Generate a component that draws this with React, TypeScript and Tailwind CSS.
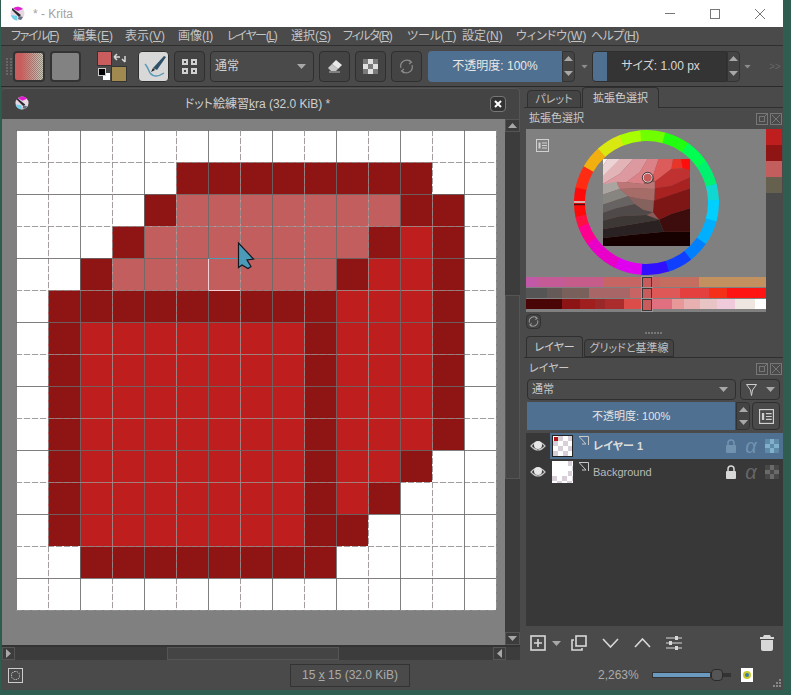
import React from 'react';

const font = "font-['Liberation_Sans','Noto_Sans_CJK_JP',sans-serif] [font-feature-settings:'palt']";

const menus = [
  { label: 'ファイル', key: 'F', w: 'w-[62px] tracking-[-1.4px]' },
  { label: '編集', key: 'E', w: 'w-[52px]' },
  { label: '表示', key: 'V', w: 'w-[53px]' },
  { label: '画像', key: 'I', w: 'w-[49px]' },
  { label: 'レイヤー', key: 'L', w: 'w-[64px] tracking-[-1.3px]' },
  { label: '選択', key: 'S', w: 'w-[52px]' },
  { label: 'フィルタ', key: 'R', w: 'w-[64px] tracking-[-1.3px]' },
  { label: 'ツール', key: 'T', w: 'w-[55px]' },
  { label: '設定', key: 'N', w: 'w-[54px]' },
  { label: 'ウィンドウ', key: 'W', w: 'w-[75px]' },
  { label: 'ヘルプ', key: 'H', w: 'w-[60px] tracking-[-0.6px]' },
];

// 15x15 sprite: . white, d dark, l light, r red
const sprite = [
  '...............',
  '.....dddddddd..',
  '....dllllllldd.',
  '...dllllllldrd.',
  '..dllllllldrrd.',
  '.dddddddddrrrd.',
  '.drrrrrrrdrrrd.',
  '.drrrrrrrdrrrd.',
  '.drrrrrrrdrrrd.',
  '.drrrrrrrdrrrd.',
  '.drrrrrrrdrrd..',
  '.drrrrrrrdrd...',
  '.drrrrrrrdd....',
  '..dddddddd.....',
  '...............',
];

const cellClass: Record<string, string> = {
  '.': 'bg-white',
  d: 'bg-[#8f1515]',
  l: 'bg-[#c25e5e]',
  r: 'bg-[#bf1e1e]',
};

const wheel: [number, number, string][] = [
  [-12, 12, '#ff0a0a'],
  [12, 30, '#ff2c14'],
  [30, 48, '#f2b010'],
  [48, 68, '#d8e810'],
  [68, 85, '#a8ff00'],
  [85, 105, '#70ff00'],
  [105, 125, '#20ff10'],
  [125, 145, '#00ff50'],
  [145, 165, '#00f070'],
  [165, 178, '#10d8d0'],
  [178, 195, '#00d0ff'],
  [195, 215, '#00b0ff'],
  [215, 232, '#0080ff'],
  [232, 252, '#1040ff'],
  [252, 274, '#3010ff'],
  [274, 296, '#e000f0'],
  [296, 325, '#e800c8'],
  [325, 340, '#ff0090'],
  [340, 348, '#ff1040'],
];

function arc(a: number, b: number, r: number) {
  const pt = (deg: number) => {
    const t = (deg * Math.PI) / 180;
    return `${72.5 - r * Math.cos(t)} ${72.5 - r * Math.sin(t)}`;
  };
  return `M${pt(a)} A${r} ${r} 0 0 1 ${pt(b)}`;
}

// back to front, in a 261 unit box
const patches: [string, string][] = [
  ['-10,-10 271,-10 271,271 -10,271', '#8a5a5a'],
  ['0,-10 20,-10 0,20', '#f6f2f2'],
  ['20,-10 60,-10 0,60 0,20', '#ecd4d6'],
  ['60,-10 100,-10 50,45 -10,80 -10,60', '#e2b4b8'],
  ['100,-10 140,-10 110,40 70,70 -10,80 50,45', '#dc9aa0'],
  ['140,-10 170,-10 150,50 120,75 70,70 110,40', '#da8288'],
  ['170,-10 212,-10 205,30 155,68 150,50', '#dc5c5c'],
  ['212,-10 232,-10 245,28 205,30', '#e8342a'],
  ['232,-10 271,-10 271,38 240,35', '#ff1010'],
  ['205,30 245,28 271,38 271,50 205,80 155,88 155,68', '#c03030'],
  ['155,88 205,80 271,50 271,85 155,125', '#a92424'],
  ['152,125 271,85 271,145 205,165 168,182 150,160', '#7f1616'],
  ['168,182 205,165 271,145 271,218 182,218', '#3c0808'],
  ['40,68 70,70 120,75 155,68 155,90 100,88 50,90', '#bc7676'],
  ['50,90 100,88 155,90 152,125 100,118 75,112', '#a56c68'],
  ['75,112 100,118 152,125 150,160 120,152 95,135', '#86625e'],
  ['-10,78 40,68 50,90 -10,110', '#aaa5a0'],
  ['-10,110 50,90 75,112 -10,140', '#878580'],
  ['-10,140 75,112 95,135 40,148 -10,165', '#666462'],
  ['-10,165 40,148 95,135 120,152 150,160 130,168 50,172 -10,188', '#504a48'],
  ['-10,188 50,172 130,168 168,182 110,192 -10,212', '#3c3836'],
  ['-10,212 110,192 168,182 182,218 80,228 -10,238', '#2a2220'],
  ['-10,238 80,228 182,218 271,218 271,271 -10,271', '#170606'],
];

const strips: [string, string][][] = [
  [
    ['w-[12px]', 'bg-[#c258a8]'],
    ['w-[27px]', 'bg-[#c45a96]'],
    ['w-[38px]', 'bg-[#c65c8a]'],
    ['w-[39px]', 'bg-[#c76464]'],
    ['s', ''],
    ['w-[8px]', 'bg-[#c96462]'],
    ['w-[39px]', 'bg-[#c56e60]'],
    ['w-[67px]', 'bg-[#c3905f]'],
  ],
  [
    ['w-[21px]', 'bg-[#555555]'],
    ['w-[15px]', 'bg-[#665a58]'],
    ['w-[27px]', 'bg-[#7a605a]'],
    ['w-[41px]', 'bg-[#a86666]'],
    ['w-[12px]', 'bg-[#c96464]'],
    ['s', ''],
    ['w-[28px]', 'bg-[#de5858]'],
    ['w-[29px]', 'bg-[#e54040]'],
    ['w-[18px]', 'bg-[#f53018]'],
    ['w-[39px]', 'bg-[#ff1414]'],
  ],
  [
    ['w-[36px]', 'bg-[#4a0606]'],
    ['w-[18px]', 'bg-[#8c1414]'],
    ['w-[15px]', 'bg-[#a01e1e]'],
    ['w-[10px]', 'bg-[#9a2828]'],
    ['w-[19px]', 'bg-[#aa2c2c]'],
    ['w-[18px]', 'bg-[#dc4c48]'],
    ['s', ''],
    ['w-[20px]', 'bg-[#e07080]'],
    ['w-[12px]', 'bg-[#e89898]'],
    ['w-[16px]', 'bg-[#e8b0b0]'],
    ['w-[17px]', 'bg-[#e8c4c4]'],
    ['w-[18px]', 'bg-[#eecada]'],
    ['w-[20px]', 'bg-[#efe6e2]'],
    ['w-[11px]', 'bg-[#ffffff]'],
  ],
];

const checker = 'bg-[repeating-conic-gradient(#d8cfd8_0_25%,#ffffff_0_50%)] bg-[length:10px_10px]';

function KritaLogo({ size = 15 }: { size?: number }) {
  return (
    <svg width={size} height={size} viewBox="0 0 15 15">
      <circle cx="7.5" cy="7.5" r="7" fill="#e8d8e4" />
      <path d="M3 2.5 A7 7 0 0 1 13 3 L8 5Z" fill="#e020d0" />
      <path d="M1 9 A7 7 0 0 0 7 14.5 L7 10Z" fill="#70d0e8" />
      <path d="M2 2 L11 9 L9 11 L2 4Z" fill="#2a2a30" />
      <path d="M9 10 L13 11 L11 14 L8 13Z" fill="#607080" />
    </svg>
  );
}

function Tri({ up = false, className = '' }: { up?: boolean; className?: string }) {
  return (
    <svg width="9" height="5" viewBox="0 0 9 5" className={className}>
      <path d={up ? 'M0 5 L4.5 0 L9 5Z' : 'M0 0 L9 0 L4.5 5Z'} fill="#a8a8a8" />
    </svg>
  );
}

function Spin({ className = '' }: { className?: string }) {
  return (
    <div className={`flex flex-col items-center justify-around rounded-r border border-[#333] bg-[#444] ${className}`}>
      <Tri up />
      <Tri />
    </div>
  );
}

function ToolBtn({ className = '', children }: { className?: string; children?: React.ReactNode }) {
  return (
    <div className={`flex h-[31px] w-[31px] shrink-0 items-center justify-center rounded border border-[#2f2f2f] bg-[#444] ${className}`}>
      {children}
    </div>
  );
}

function FloatIcons() {
  return (
    <div className="flex gap-[2px]">
      <svg width="12" height="12" viewBox="0 0 12 12" fill="none" stroke="#777">
        <rect x="0.5" y="0.5" width="11" height="11" />
        <rect x="3.5" y="3.5" width="5" height="5" />
        <path d="M8 4 L11 1" />
      </svg>
      <svg width="12" height="12" viewBox="0 0 12 12" fill="none" stroke="#777">
        <rect x="0.5" y="0.5" width="11" height="11" />
        <path d="M2 2 L10 10 M10 2 L2 10" />
      </svg>
    </div>
  );
}

function ConfigIcon({ size = 13 }: { size?: number }) {
  return (
    <svg width={size} height={size} viewBox="0 0 13 13" fill="none" stroke="#d0d0d0">
      <rect x="0.5" y="0.5" width="12" height="12" />
      <rect x="2.5" y="3.5" width="2" height="6" fill="#d0d0d0" stroke="none" />
      <path d="M6 4 H11 M6 6.5 H11 M6 9 H11" />
    </svg>
  );
}

function Eye() {
  return (
    <svg width="16" height="14" viewBox="0 0 16 14" className="shrink-0">
      <path d="M1 7 Q8 -1 15 7 Q8 15 1 7Z" fill="#3a3a3a" stroke="#c8c8c8" strokeWidth="1.2" />
      <circle cx="8" cy="6" r="4" fill="#e8e8e8" />
    </svg>
  );
}

function LinkMark() {
  return (
    <svg width="14" height="13" viewBox="0 0 14 13" fill="none" stroke="#c8c8c8" className="shrink-0">
      <path d="M1 1.5 H10.5 V10 M1.5 2 L8 9 H4" />
    </svg>
  );
}

function AlphaChecker({ light }: { light: boolean }) {
  const a = light ? 'bg-[#7fb0cc]' : 'bg-[#6a6a6a]';
  const b = light ? 'bg-[#5f8aa8]' : 'bg-[#484848]';
  return (
    <div className="grid h-[14px] w-[14px] grid-cols-3 grid-rows-3">
      {[0, 1, 2, 3, 4, 5, 6, 7, 8].map((i) => (
        <div key={i} className={i % 2 ? a : b} />
      ))}
    </div>
  );
}

function TitleBar() {
  return (
    <div className="flex h-[27px] shrink-0 items-center bg-white pl-[9px]">
      <KritaLogo />
      <span className="ml-[8px] text-[12px] text-[#a8a0a0]">* - Krita</span>
      <div className="ml-auto flex items-center gap-[35px] pr-[18px]">
        <div className="h-px w-[10px] bg-[#777]" />
        <div className="h-[10px] w-[10px] border border-[#777]" />
        <svg width="10" height="10" viewBox="0 0 10 10" stroke="#777">
          <path d="M0 0 L10 10 M10 0 L0 10" />
        </svg>
      </div>
    </div>
  );
}

function MenuBar() {
  return (
    <div className="flex h-[19px] shrink-0 items-center border-b border-[#2f2f2f] pl-[10px] text-[12px] leading-none text-[#c4c4c4]">
      {menus.map((m) => (
        <div key={m.key} className={`${m.w} whitespace-nowrap`}>
          {m.label}(<u>{m.key}</u>)
        </div>
      ))}
    </div>
  );
}

function Toolbar() {
  return (
    <div className="flex h-[41px] shrink-0 items-center border-b border-[#2a2a2a] pl-[5px] text-[#d8d8d8]">
      <div className="mr-px grid w-[6px] grid-cols-2 gap-px">
        {[...Array(12)].map((_, i) => (
          <div key={i} className="h-[2px] w-[2px] bg-[#666]" />
        ))}
      </div>
      <div className="h-[31px] w-[32px] rounded border-2 border-[#333] bg-[linear-gradient(90deg,#c95c5c_20%,#c95c5c00_95%),repeating-conic-gradient(#cfc8b8_0_25%,#8c8c80_0_50%)] bg-[length:100%_100%,2px_2px]" />
      <div className="ml-[5px] h-[31px] w-[31px] rounded border-2 border-[#333] bg-[#828282]" />
      <div className="relative ml-[17px] h-[29px] w-[28px] shrink-0">
        <div className="h-[13px] w-[13px] bg-[#c95c5c] outline outline-[#333]" />
        <div className="absolute bottom-0 right-0 h-[14px] w-[14px] bg-[#a08a50] outline outline-[#333]" />
        <div className="absolute bottom-[1px] left-[5px] h-[7px] w-[7px] bg-white" />
        <div className="absolute bottom-[5px] left-0 h-[8px] w-[8px] border border-[#ccc] bg-black" />
        <svg width="13" height="13" viewBox="0 0 13 13" fill="none" stroke="#d8d8d8" strokeWidth="1.5" className="absolute right-0 top-px">
          <path d="M1 4 H7 M1 4 L4 1 M1 4 L4 7 M12 9 V3 M12 9 L9 6" />
        </svg>
      </div>
      <ToolBtn className="ml-[12px] bg-[#d8d8d8]">
        <svg width="27" height="27" viewBox="0 0 27 27">
          <path d="M10 20 Q15 26 24 20" fill="none" stroke="#5a9ab8" strokeWidth="1.5" />
          <path d="M5 11 Q7 13 10 20" fill="none" stroke="#5a9ab8" strokeWidth="1.5" />
          <path d="M13 15 L24 3 L26 4 L17 17Z" fill="#2f5068" />
          <path d="M13 15 L11 19 L15 17Z" fill="#222" />
        </svg>
      </ToolBtn>
      <ToolBtn className="ml-[5px]">
        <svg width="17" height="17" viewBox="0 0 17 17" fill="#d0d0d0">
          <path d="M1 1h6v6H1zM10 1h6v6h-6zM1 10h6v6H1zM10 10h6v6h-6z" />
          <path d="M3 3h2v2H3zM12 3h2v2h-2zM3 12h2v2H3zM12 12h2v2h-2z" fill="#444" />
        </svg>
      </ToolBtn>
      <div className="ml-[5px] flex h-[31px] w-[104px] shrink-0 items-center justify-between rounded border border-[#2f2f2f] pl-[4px] pr-[7px] text-[12px] text-[#d0d0d0]">
        通常
        <Tri />
      </div>
      <ToolBtn className="ml-[5px]">
        <svg width="15" height="13" viewBox="0 0 15 13">
          <path d="M9 0 L15 5 L11 9 L5 4Z" fill="#e8e8e8" />
          <path d="M5 4 L11 9 L9 11 H4 L1 8Z" fill="#c8c8c8" />
          <path d="M2 12 H13" stroke="#bbb" />
        </svg>
      </ToolBtn>
      <ToolBtn className="ml-[5px]">
        <div className="grid h-[15px] w-[15px] grid-cols-3 grid-rows-3">
          {[0, 1, 2, 3, 4, 5, 6, 7, 8].map((i) => (
            <div key={i} className={i % 2 ? 'bg-[#e0e0e0]' : 'bg-[#7a7a7a]'} />
          ))}
        </div>
      </ToolBtn>
      <ToolBtn className="ml-[5px]">
        <svg width="15" height="15" viewBox="0 0 15 15" fill="none" stroke="#8a8a8a" strokeWidth="1.2">
          <path d="M2 9 A6 6 0 0 1 12 3 M13 6 A6 6 0 0 1 3 12" />
          <path d="M10 1 L12.5 3.2 L10 5 M5 10 L2.5 12 L5 14" />
        </svg>
      </ToolBtn>
      <div className="ml-[6px] flex h-[31px] w-[134px] shrink-0 items-center justify-center rounded-l bg-[#4f7090] text-[12px] text-[#e8e8e8]">
        不透明度: 100%
      </div>
      <Spin className="h-[31px] w-[13px]" />
      <Tri className="ml-[5px] scale-75 opacity-70" />
      <div className="ml-[3px] flex h-[31px] w-[135px] shrink-0 overflow-hidden rounded-l border border-[#2f2f2f] bg-[#343434] text-[12px] text-[#d8d8d8]">
        <div className="h-full w-[14px] bg-[#4f7090]" />
        <div className="flex-1 pr-[12px] text-center leading-[29px]">サイズ: 1.00 px</div>
      </div>
      <Spin className="h-[31px] w-[13px]" />
      <Tri className="ml-[3px] scale-75 opacity-70" />
      <span className="ml-[17px] text-[10px] text-[#666]">&gt;&gt;</span>
    </div>
  );
}

function PixelCanvas() {
  const lines = Array.from({ length: 16 }, (_, i) => i * 32 + 0.5);
  return (
    <div className="relative w-[481px]">
      <div className="grid grid-cols-[repeat(15,32px)] grid-rows-[repeat(15,32px)]">
        {sprite.flatMap((row, y) =>
          row.split('').map((c, x) => <div key={`${x}-${y}`} className={cellClass[c]} />),
        )}
      </div>
      <svg width="481" height="481" className="absolute left-0 top-0">
        {lines.map((p, i) =>
          i % 2 && i !== 15 ? (
            <g key={i}>
              <path d={`M${p} 0 V480 M0 ${p} H480`} stroke="#f0d8d8" strokeOpacity="0.4" />
              <path d={`M${p} 0 V480 M0 ${p} H480`} stroke="#8a8a8a" strokeOpacity="0.8" strokeDasharray="6 2" />
            </g>
          ) : i === 15 ? (
            <path key={i} d={`M${p} 0 V480 M0 ${p} H480`} stroke="#909090" strokeDasharray="6 2" />
          ) : (
            <path key={i} d={`M${p} 0 V480 M0 ${p} H480`} stroke="#6a6a6a" strokeOpacity="0.85" />
          ),
        )}
        <path d="M192.5 128.5 H224" stroke="#4a9ab8" />
        <path d="M192.5 129 V160.5 H224" stroke="#f0d0d4" fill="none" />
        <path d="M222.5 113 V137.5 L226 135 L232 138.5 L235 136.5 L231 130 L237.5 129Z" fill="#4a9ab8" stroke="#101820" strokeWidth="1.2" />
      </svg>
    </div>
  );
}

function DocWindow() {
  return (
    <div className="ml-px mt-px flex w-[518px] shrink-0 flex-col">
      <div className="relative flex h-[31px] shrink-0 items-center justify-center rounded-t border-t border-r border-[#555] bg-[#444] text-[12px] text-[#cfcfcf]">
        <div className="absolute left-[13px] top-[7px]">
          <KritaLogo size={14} />
        </div>
        <span className="mr-[6px]">
          ドット絵練習<u>k</u>ra (32.0 KiB) *
        </span>
        <div className="absolute left-[488px] top-[7px] flex h-[16px] w-[16px] items-center justify-center rounded-sm border border-[#777] bg-[#333]">
          <svg width="8" height="8" viewBox="0 0 8 8" stroke="#fff" strokeWidth="2">
            <path d="M1 1 L7 7 M7 1 L1 7" />
          </svg>
        </div>
      </div>
      <div className="flex h-[526px] shrink-0">
        <div className="w-[503px] shrink-0 bg-[#808080] pl-[14px] pt-[11px]">
          <PixelCanvas />
        </div>
        <div className="flex w-[15px] shrink-0 flex-col bg-[#3c3c3c]">
          <div className="flex h-[13px] shrink-0 items-center justify-center border border-[#555]">
            <Tri up />
          </div>
          <div className="mt-[163px] h-[184px] shrink-0 border border-[#555] bg-[#444]" />
          <div className="mt-auto flex h-[13px] shrink-0 items-center justify-center border border-[#555]">
            <Tri />
          </div>
        </div>
      </div>
      <div className="flex h-[15px] shrink-0 border-t-2 border-[#333] bg-[#3c3c3c]">
        <div className="flex w-[13px] shrink-0 items-center justify-center border border-[#555]">
          <Tri className="-rotate-90" />
        </div>
        <div className="ml-[152px] w-[172px] shrink-0 border border-[#555] bg-[#444]" />
        <div className="ml-[154px] flex w-[13px] shrink-0 items-center justify-center border border-[#555]">
          <Tri className="rotate-90" />
        </div>
      </div>
    </div>
  );
}

function ColorWheel() {
  return (
    <svg width="145" height="145" viewBox="0 0 145 145">
      {wheel.map(([a, b, c]) => (
        <path key={a} d={arc(a, b + 0.5, 67)} fill="none" stroke={c} strokeWidth="11" />
      ))}
      <path d="M0 72 H11" stroke="#d8b0b0" strokeWidth="2" />
      <path d="M0 74.5 H11" stroke="#501010" strokeWidth="1.5" />
      <svg x="29" y="29" width="87" height="87" viewBox="0 0 261 261">
        <filter id="soft" x="0" y="0" width="100%" height="100%">
          <feGaussianBlur stdDeviation="1.5" edgeMode="duplicate" />
        </filter>
        <g filter="url(#soft)">
          {patches.map(([pts, c]) => (
            <polygon key={pts} points={pts} fill={c} />
          ))}
        </g>
      </svg>
      <circle cx="73.7" cy="47.7" r="4.6" fill="#c85c5c" stroke="#e8e8e8" strokeWidth="1" />
      <circle cx="73.7" cy="47.7" r="5.4" fill="none" stroke="#222" strokeWidth="0.8" />
    </svg>
  );
}

function ColorDocker() {
  return (
    <div className="flex">
      <div className="w-[240px] shrink-0 bg-[#808080]">
        <div className="relative flex h-[148px] justify-center pt-px">
          <div className="absolute left-[10px] top-[10px]">
            <ConfigIcon />
          </div>
          <ColorWheel />
        </div>
        <div className="flex flex-col gap-px pb-[3px]">
          {strips.map((row, i) => (
            <div key={i} className="flex h-[10px]">
              {row.map(([w, bg], j) =>
                w === 's' ? (
                  <div key={j} className="h-[12px] w-[10px] shrink-0 border border-[#3a3a3a] bg-[#c85c5c] outline outline-[#999]" />
                ) : (
                  <div key={j} className={`${w} ${bg} shrink-0`} />
                ),
              )}
            </div>
          ))}
        </div>
      </div>
      <div className="w-[16px] shrink-0">
        <div className="h-[16px] bg-[#bf1e1e]" />
        <div className="h-[16px] bg-[#8f1515]" />
        <div className="h-[16px] bg-[#c25e5e]" />
        <div className="h-[16px] bg-[#66604f]" />
      </div>
    </div>
  );
}

function LayerRow({ name, active, thumbRed }: { name: string; active: boolean; thumbRed: boolean }) {
  return (
    <div className="flex h-[26px] items-center pl-[4px]">
      <Eye />
      <div className={`ml-[4px] flex h-full flex-1 items-center ${active ? 'bg-[#4f7090]' : ''}`}>
        <div className={`relative ml-[2px] h-[22px] w-[21px] shrink-0 ${checker} ${active ? 'border border-[#222]' : ''}`}>
          {thumbRed && <div className="absolute left-px top-px h-[4px] w-[4px] bg-[#b01515]" />}
          {!thumbRed && <div className="absolute left-0 top-0 h-[15px] w-[16px] bg-white" />}
        </div>
        <div className="ml-[5px] self-start pt-[2px]">
          <LinkMark />
        </div>
        <div className={`ml-px flex-1 text-[11px] ${active ? 'font-bold text-[#dcdcdc]' : 'text-[#b8b8b8]'}`}>{name}</div>
        <div className="flex items-center gap-[6px] pr-[4px]">
          <svg width="12" height="14" viewBox="0 0 12 14" className={active ? 'opacity-40' : ''}>
            <path d="M3 6 V4 A3 3 0 0 1 9 4 V6" fill="none" stroke={active ? '#a8c8e0' : '#d8d8d8'} strokeWidth="1.5" />
            <rect x="1" y="6" width="10" height="8" rx="1" fill={active ? '#a8c8e0' : '#d8d8d8'} />
          </svg>
          <span className={`w-[16px] text-center text-[20px] italic leading-none ${active ? 'text-[#6f93b0]' : 'text-[#666]'}`}>α</span>
          <AlphaChecker light={active} />
        </div>
      </div>
    </div>
  );
}

function LayerDocker() {
  return (
    <div className="flex flex-1 flex-col">
      <div className="flex h-[21px] items-center pr-[1px] text-[11px] text-[#c8c8c8]">
        <span className="ml-[5px]">レイヤー</span>
        <div className="ml-auto">
          <FloatIcons />
        </div>
      </div>
      <div className="flex h-[21px] gap-[4px] px-[3px]">
        <div className="flex w-[210px] items-center justify-between rounded border border-[#2f2f2f] pl-[4px] pr-[7px] text-[11px] text-[#c8c8c8]">
          通常
          <Tri />
        </div>
        <div className="flex w-[40px] items-center justify-around rounded border border-[#2f2f2f]">
          <svg width="11" height="12" viewBox="0 0 11 12" fill="none" stroke="#d0d0d0">
            <path d="M0.5 0.5 H10.5 L6.5 6 L5.5 11.5 L4.5 6Z" />
          </svg>
          <Tri />
        </div>
      </div>
      <div className="mt-[2px] flex h-[28px] px-[3px]">
        <div className="flex w-[209px] items-center justify-center bg-[#4f7090] text-[11px] text-[#e4e4e4]">不透明度: 100%</div>
        <Spin className="ml-px h-full w-[14px]" />
        <div className="ml-[2px] flex w-[28px] items-center justify-center rounded border border-[#2f2f2f]">
          <ConfigIcon size={15} />
        </div>
      </div>
      <div className="ml-[2px] mt-[3px] flex-1 bg-[#383838] text-[#c8c8c8]">
        <LayerRow name="レイヤー 1" active thumbRed />
        <LayerRow name="Background" active={false} thumbRed={false} />
      </div>
      <div className="flex h-[34px] shrink-0 items-center pl-[6px] pr-[9px]">
        <svg width="16" height="16" viewBox="0 0 16 16" fill="none" stroke="#d8d8d8" strokeWidth="1.6">
          <rect x="1" y="1" width="14" height="14" />
          <path d="M8 4 V12 M4 8 H12" />
        </svg>
        <Tri className="ml-[6px]" />
        <svg width="16" height="16" viewBox="0 0 16 16" fill="none" stroke="#d8d8d8" strokeWidth="1.6" className="ml-[10px]">
          <rect x="5" y="1" width="10" height="10" />
          <path d="M3 5 H1 V15 H11 V13" />
        </svg>
        <svg width="17" height="10" viewBox="0 0 17 10" fill="none" stroke="#d8d8d8" strokeWidth="1.6" className="ml-[15px]">
          <path d="M1 1 L8.5 9 L16 1" />
        </svg>
        <svg width="17" height="10" viewBox="0 0 17 10" fill="none" stroke="#d8d8d8" strokeWidth="1.6" className="ml-[15px]">
          <path d="M1 9 L8.5 1 L16 9" />
        </svg>
        <svg width="16" height="16" viewBox="0 0 16 16" fill="#d8d8d8" stroke="#d8d8d8" className="ml-[15px]">
          <path d="M0 3 H16 M0 8 H16 M0 13 H16" strokeWidth="1.2" />
          <path d="M9 1 H12 V5 H9Z M3 6 H6 V10 H3Z M9 11 H12 V15 H9Z" stroke="none" />
        </svg>
        <svg width="14" height="16" viewBox="0 0 14 16" fill="#d8d8d8" className="ml-auto">
          <path d="M4 0 H10 L11 2 H14 V4 H0 V2 H3Z" />
          <path d="M1 5 H13 V14 Q13 16 11 16 H3 Q1 16 1 14Z" />
        </svg>
      </div>
    </div>
  );
}

function Tab({ label, active, w }: { label: string; active: boolean; w: string }) {
  return (
    <div
      className={`${w} flex items-center justify-center rounded-t border border-[#2f2f2f] text-[11px] ${
        active ? 'h-[21px] border-b-0 bg-[#4a4a4a] text-[#d0d0d0]' : 'mt-[3px] h-[18px] bg-[#444] text-[#c0c0c0]'
      }`}
    >
      {label}
    </div>
  );
}

function RightPanel() {
  return (
    <div className="ml-[4px] flex min-w-0 flex-1 flex-col">
      <div className="flex h-[21px] shrink-0 gap-px border-b border-[#2f2f2f] pl-[3px]">
        <Tab label="パレット" active={false} w="w-[54px]" />
        <Tab label="拡張色選択" active w="w-[77px]" />
      </div>
      <div className="flex h-[21px] shrink-0 items-center pr-[1px] text-[11px] text-[#c8c8c8]">
        <span className="ml-[5px]">拡張色選択</span>
        <div className="ml-auto">
          <FloatIcons />
        </div>
      </div>
      <div className="pl-[2px]">
        <ColorDocker />
      </div>
      <div className="ml-[2px] mt-[2px] flex h-[15px] w-[15px] items-center justify-center rounded-sm border border-[#333] bg-[#444]">
        <svg width="11" height="11" viewBox="0 0 15 15" fill="none" stroke="#999" strokeWidth="1.4">
          <path d="M2 9 A6 6 0 0 1 12 3 M13 6 A6 6 0 0 1 3 12" />
          <path d="M10 1 L12.5 3.2 L10 5 M5 10 L2.5 12 L5 14" />
        </svg>
      </div>
      <div className="mx-auto mt-[3px] flex gap-px">
        {[0, 1, 2, 3, 4, 5].map((i) => (
          <div key={i} className="h-[2px] w-[2px] bg-[#777]" />
        ))}
      </div>
      <div className="mt-[2px] flex h-[22px] shrink-0 gap-px border-b border-[#2f2f2f] pl-[2px]">
        <Tab label="レイヤー" active w="w-[57px]" />
        <Tab label="グリッドと基準線" active={false} w="w-[90px]" />
      </div>
      <LayerDocker />
    </div>
  );
}

function StatusBar() {
  return (
    <div className="relative flex h-[30px] shrink-0 items-center text-[#aaaaaa]">
      <div className="ml-[7px] flex h-[15px] w-[15px] items-center justify-center border border-[#ccc]">
        <div className="h-[9px] w-[9px] rounded-full border border-dotted border-[#ddd]" />
      </div>
      <div className="ml-[267px] flex h-[23px] w-[120px] items-center justify-center border border-[#333] text-[12px]">
        <span>
          15 <u>x</u> 15 (32.0 KiB)
        </span>
      </div>
      <span className="ml-[188px] w-[54px] text-[12px]">2,263%</span>
      <div className="flex w-[71px] items-center">
        <div className="h-[6px] w-[59px] border border-[#333] bg-[#6a9ac0]" />
        <div className="h-[12px] w-[12px] rounded-sm border border-[#2a2a2a] bg-[#555]" />
      </div>
      <div className="h-[4px] w-[8px] bg-[#333]" />
      <div className="ml-[10px] flex h-[14px] w-[12px] items-center justify-center bg-white">
        <div className="h-[8px] w-[8px] rounded-full border-2 border-[#c8c830] bg-[#3a7aa8]" />
      </div>
      <svg width="11" height="11" viewBox="0 0 11 11" fill="#888" className="absolute bottom-[1px] right-[1px]">
        <path d="M8 1h2v2H8zM5 4h2v2H5zM8 4h2v2H8zM2 7h2v2H2zM5 7h2v2H5zM8 7h2v2H8z" />
      </svg>
    </div>
  );
}

export default function App() {
  return (
    <div className={`h-[695px] w-[791px] overflow-hidden bg-[#2f5d50] pl-px ${font}`}>
      <div className="flex h-[690px] w-[782px] flex-col bg-[#4a4a4a]">
        <TitleBar />
        <MenuBar />
        <Toolbar />
        <div className="flex min-h-0 flex-1">
          <DocWindow />
          <RightPanel />
        </div>
        <StatusBar />
      </div>
    </div>
  );
}
